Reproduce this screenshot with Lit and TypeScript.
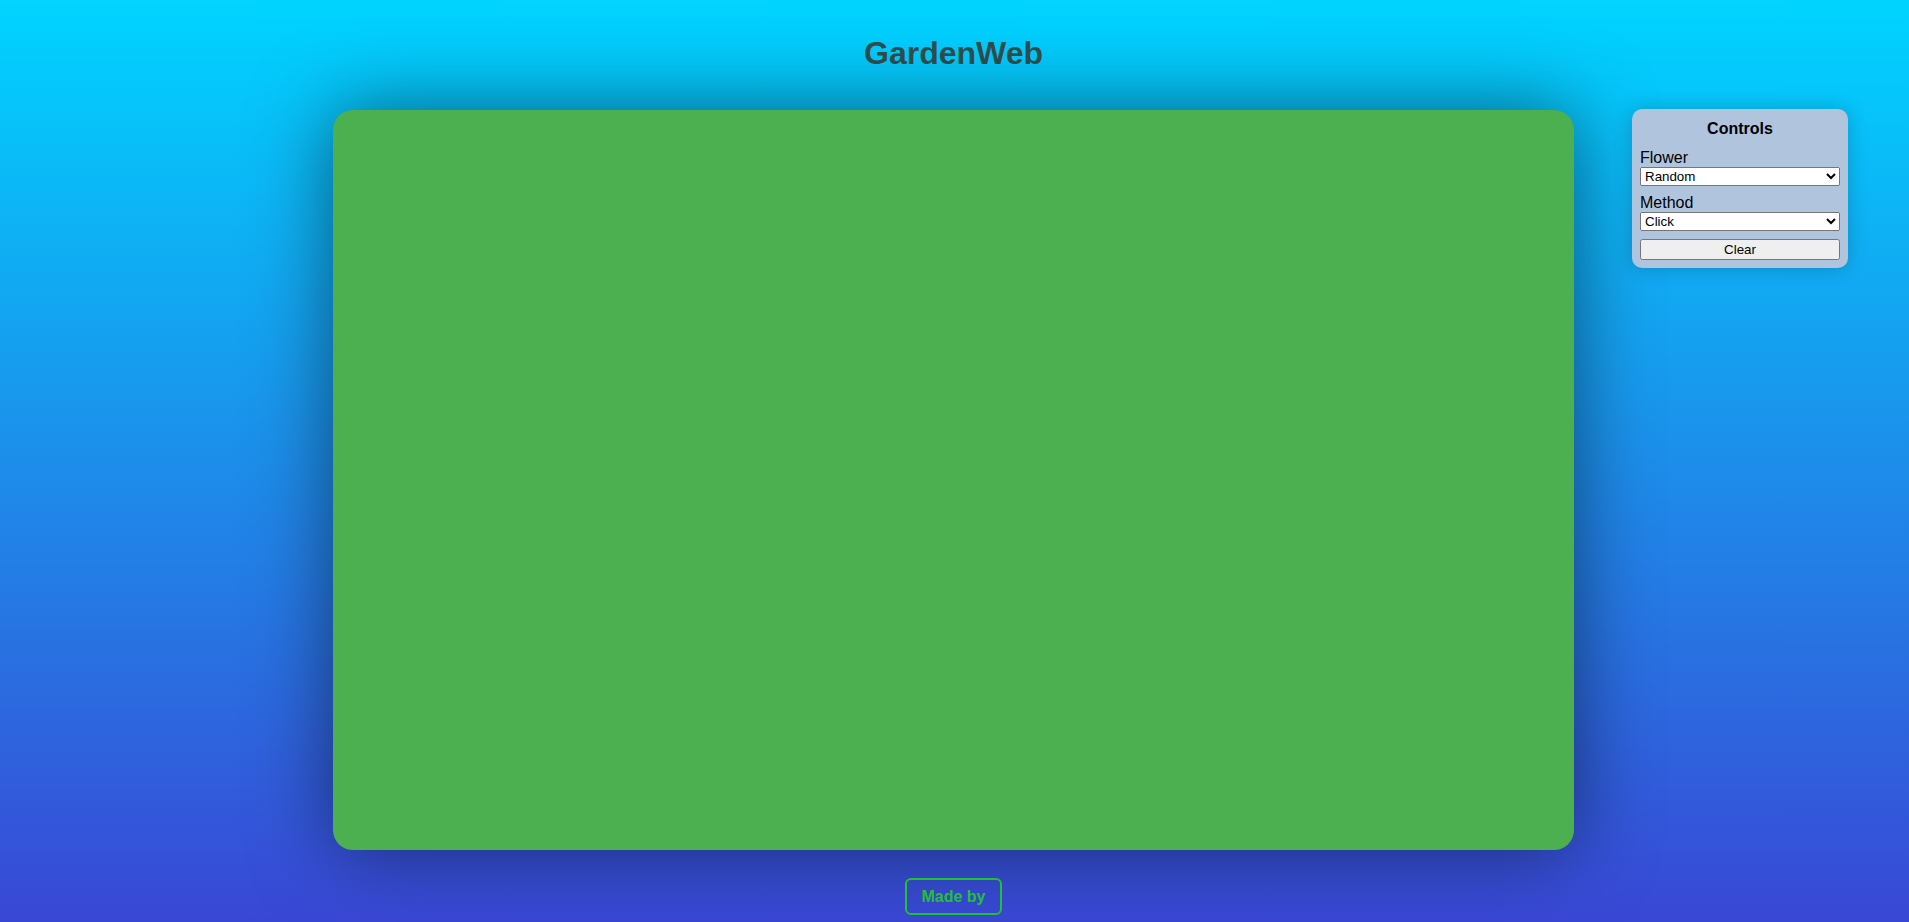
import { LitElement, html, css } from "lit";
import { customElement, state } from "lit/decorators.js";

@customElement("app-root")
export class AppRoot extends LitElement {
  static styles = css`
    :host {
      display: block;
      font-family: "Liberation Sans", Arial, sans-serif;
      font-size: 16px;
    }
    .page {
      box-sizing: border-box;
      min-height: 100vh;
      padding: 0 61px 7px 59px;
      display: grid;
      grid-template-columns: 1fr 65vw 1fr;
      grid-template-rows: 109px 1fr auto;
      background: linear-gradient(to bottom, #00d4ff, #3a47d5);
    }
    .title {
      grid-column: 2;
      margin: 35px 0 0;
      text-align: center;
      font-size: 32px;
      color: darkslategray;
    }
    .garden {
      grid-column: 2;
      grid-row: 2;
      margin-top: 1px;
      border-radius: 20px;
      background: #4caf50;
      box-shadow: 0 0 80px rgba(0, 0, 0, 0.5);
    }
    .controls {
      grid-column: 3;
      grid-row: 2;
      align-self: start;
      justify-self: end;
      box-sizing: border-box;
      width: 216px;
      padding: 8px;
      display: flex;
      flex-direction: column;
      gap: 8px;
      border-radius: 10px;
      background: lightsteelblue;
      box-shadow: 0 0 20px rgba(0, 0, 0, 0.2);
    }
    .heading {
      margin: 3px 0;
      text-align: center;
      font-size: 16px;
    }
    .field {
      display: flex;
      flex-direction: column;
    }
    .made {
      grid-column: 2;
      grid-row: 3;
      justify-self: center;
      margin-top: 28px;
      padding: 8px 14px 7px;
      border: 2px solid #22c132;
      border-radius: 6px;
      font-weight: bold;
      color: #22c132;
      text-decoration: none;
    }
  `;

  @state() private flower = "Random";
  @state() private method = "Click";

  render() {
    return html`
      <main class="page">
        <h1 class="title">GardenWeb</h1>
        <section class="garden" aria-label="Garden"></section>
        <aside class="controls">
          <h2 class="heading">Controls</h2>
          <div class="field">
            <label for="flower">Flower</label>
            <select id="flower" @change=${(e: Event) => (this.flower = (e.target as HTMLSelectElement).value)}>
              <option>${this.flower}</option>
            </select>
          </div>
          <div class="field">
            <label for="method">Method</label>
            <select id="method" @change=${(e: Event) => (this.method = (e.target as HTMLSelectElement).value)}>
              <option>${this.method}</option>
            </select>
          </div>
          <button type="button">Clear</button>
        </aside>
        <a class="made" href="#">Made by</a>
      </main>
    `;
  }
}
